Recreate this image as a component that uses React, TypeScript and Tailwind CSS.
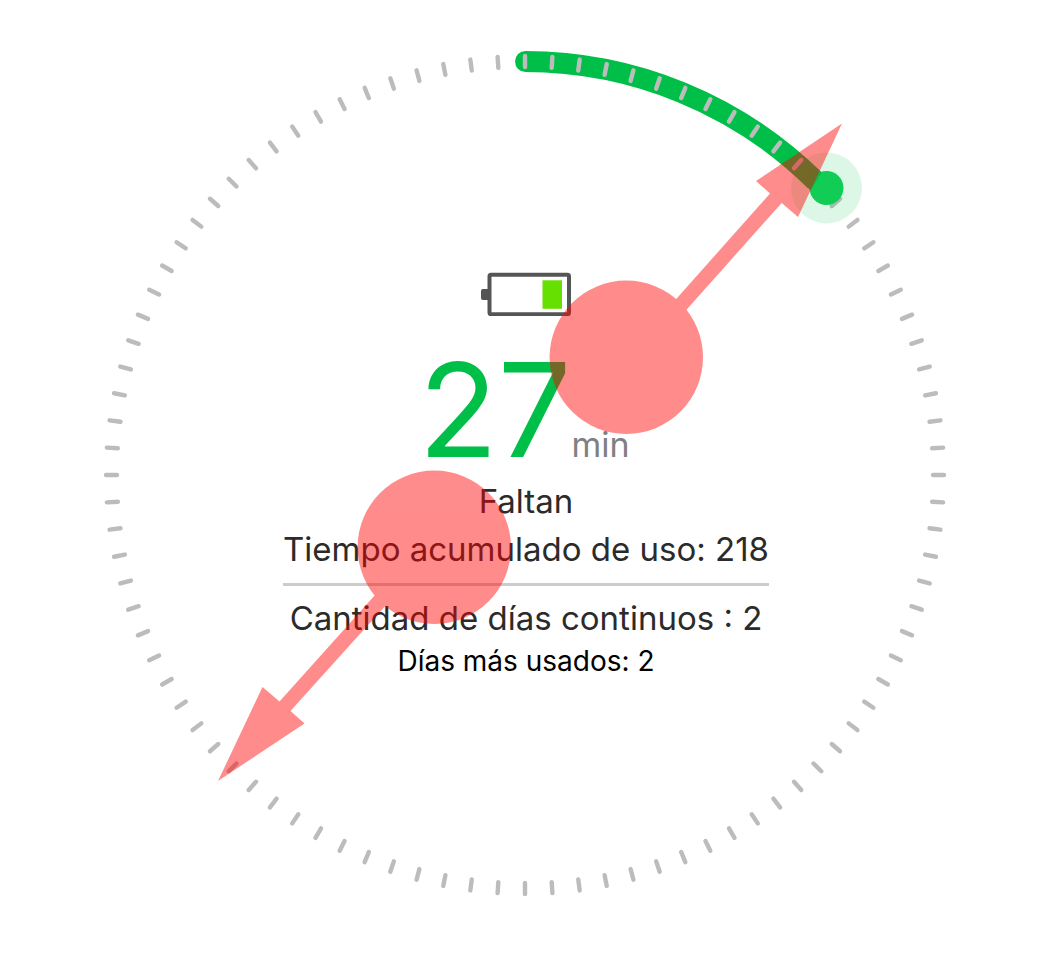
const CENTER_X = 525;
const CENTER_Y = 475;
const RADIUS = 413;
const TICK_COUNT = 96;

const ticks = Array.from({ length: TICK_COUNT }, (_, i) => (i * 360) / TICK_COUNT);

function Dial() {
  return (
    <svg
      viewBox="0 0 1051 962"
      className="col-start-1 row-start-1 w-full"
      role="img"
      aria-label="27 min"
    >
      <path
        d={`M${CENTER_X} ${CENTER_Y - RADIUS - 0.5}A${RADIUS} ${RADIUS} 0 0 1 815 180.5`}
        fill="none"
        stroke="#00bf48"
        strokeWidth="21"
      />
      <path d="M525.5 51a10.5 10.5 0 0 0 0 21z" fill="#00bf48" />
      {ticks.map((angle) => (
        <line
          key={angle}
          x1={CENTER_X}
          x2={CENTER_X}
          y1={CENTER_Y - 419}
          y2={CENTER_Y - 408}
          stroke="#bcbcbc"
          strokeWidth="4.4"
          strokeLinecap="round"
          transform={`rotate(${angle} ${CENTER_X} ${CENTER_Y})`}
        />
      ))}
      <circle cx="826.5" cy="188" r="35.5" fill="#11cc55" fillOpacity="0.15" />
      <circle cx="826.5" cy="188" r="17" fill="#11cc55" />
      <path d="M807 173L815 166.500L821.500 172.500L811 190L807 187.500z" fill="#00bf48" />
    </svg>
  );
}

function PinchGesture() {
  return (
    <svg
      viewBox="0 0 1051 962"
      className="pointer-events-none z-10 col-start-1 row-start-1 w-full"
      aria-hidden="true"
    >
      <g fill="#ff0000" opacity="0.45">
        <circle cx="626.3" cy="357.3" r="76.7" />
        <path d="M842 123.500L756 181L770 193.500L670 306L680 317L781.700 203L798 217z" />
        <circle cx="434.3" cy="547.3" r="76.7" />
        <path d="M218 781L262.500 687L279.500 701.500L380 589.500L391 599.500L290.500 711L304.500 723.500z" />
      </g>
    </svg>
  );
}

function Battery() {
  return (
    <svg viewBox="0 0 90 44" className="h-11 w-[90px]" role="img" aria-label="Batería">
      <path d="M7 17H2a2 2 0 0 0-2 2v7a2 2 0 0 0 2 2h5z" fill="#555555" />
      <rect x="8.500" y="2.700" width="79.500" height="39.500" rx="1.500" fill="#ffffff" stroke="#555555" strokeWidth="4" />
      <rect x="61.500" y="8.300" width="19.500" height="28.500" fill="#66e000" />
    </svg>
  );
}

export default function App() {
  return (
    <main className="mx-auto grid min-h-screen w-full max-w-[1051px] bg-white font-['Inter',sans-serif]">
      <Dial />
      <section className="col-start-1 row-start-1 flex flex-col items-center justify-self-center pl-px pt-[272px] text-center text-[#2b2b2b]">
        <Battery />
        <p className="mr-1 mt-15 flex items-baseline leading-[68px]">
          <span className="text-[130px] text-[#00bf48]">27</span>
          <span className="text-[34px] text-[#808080]">min</span>
        </p>
        <p className="text-[33px] leading-[44px]">Faltan</p>
        <p className="mt-1 text-[33px] leading-[44px]">Tiempo acumulado de uso: 218</p>
        <hr className="mt-3 h-[3px] w-[486px] border-0 bg-[#cccccc]" />
        <p className="mt-2.5 text-[33px] leading-[44px]">Cantidad de días continuos : 2</p>
        <p className="text-[28px] leading-[42px] text-black">Días más usados: 2</p>
      </section>
      <PinchGesture />
    </main>
  );
}
